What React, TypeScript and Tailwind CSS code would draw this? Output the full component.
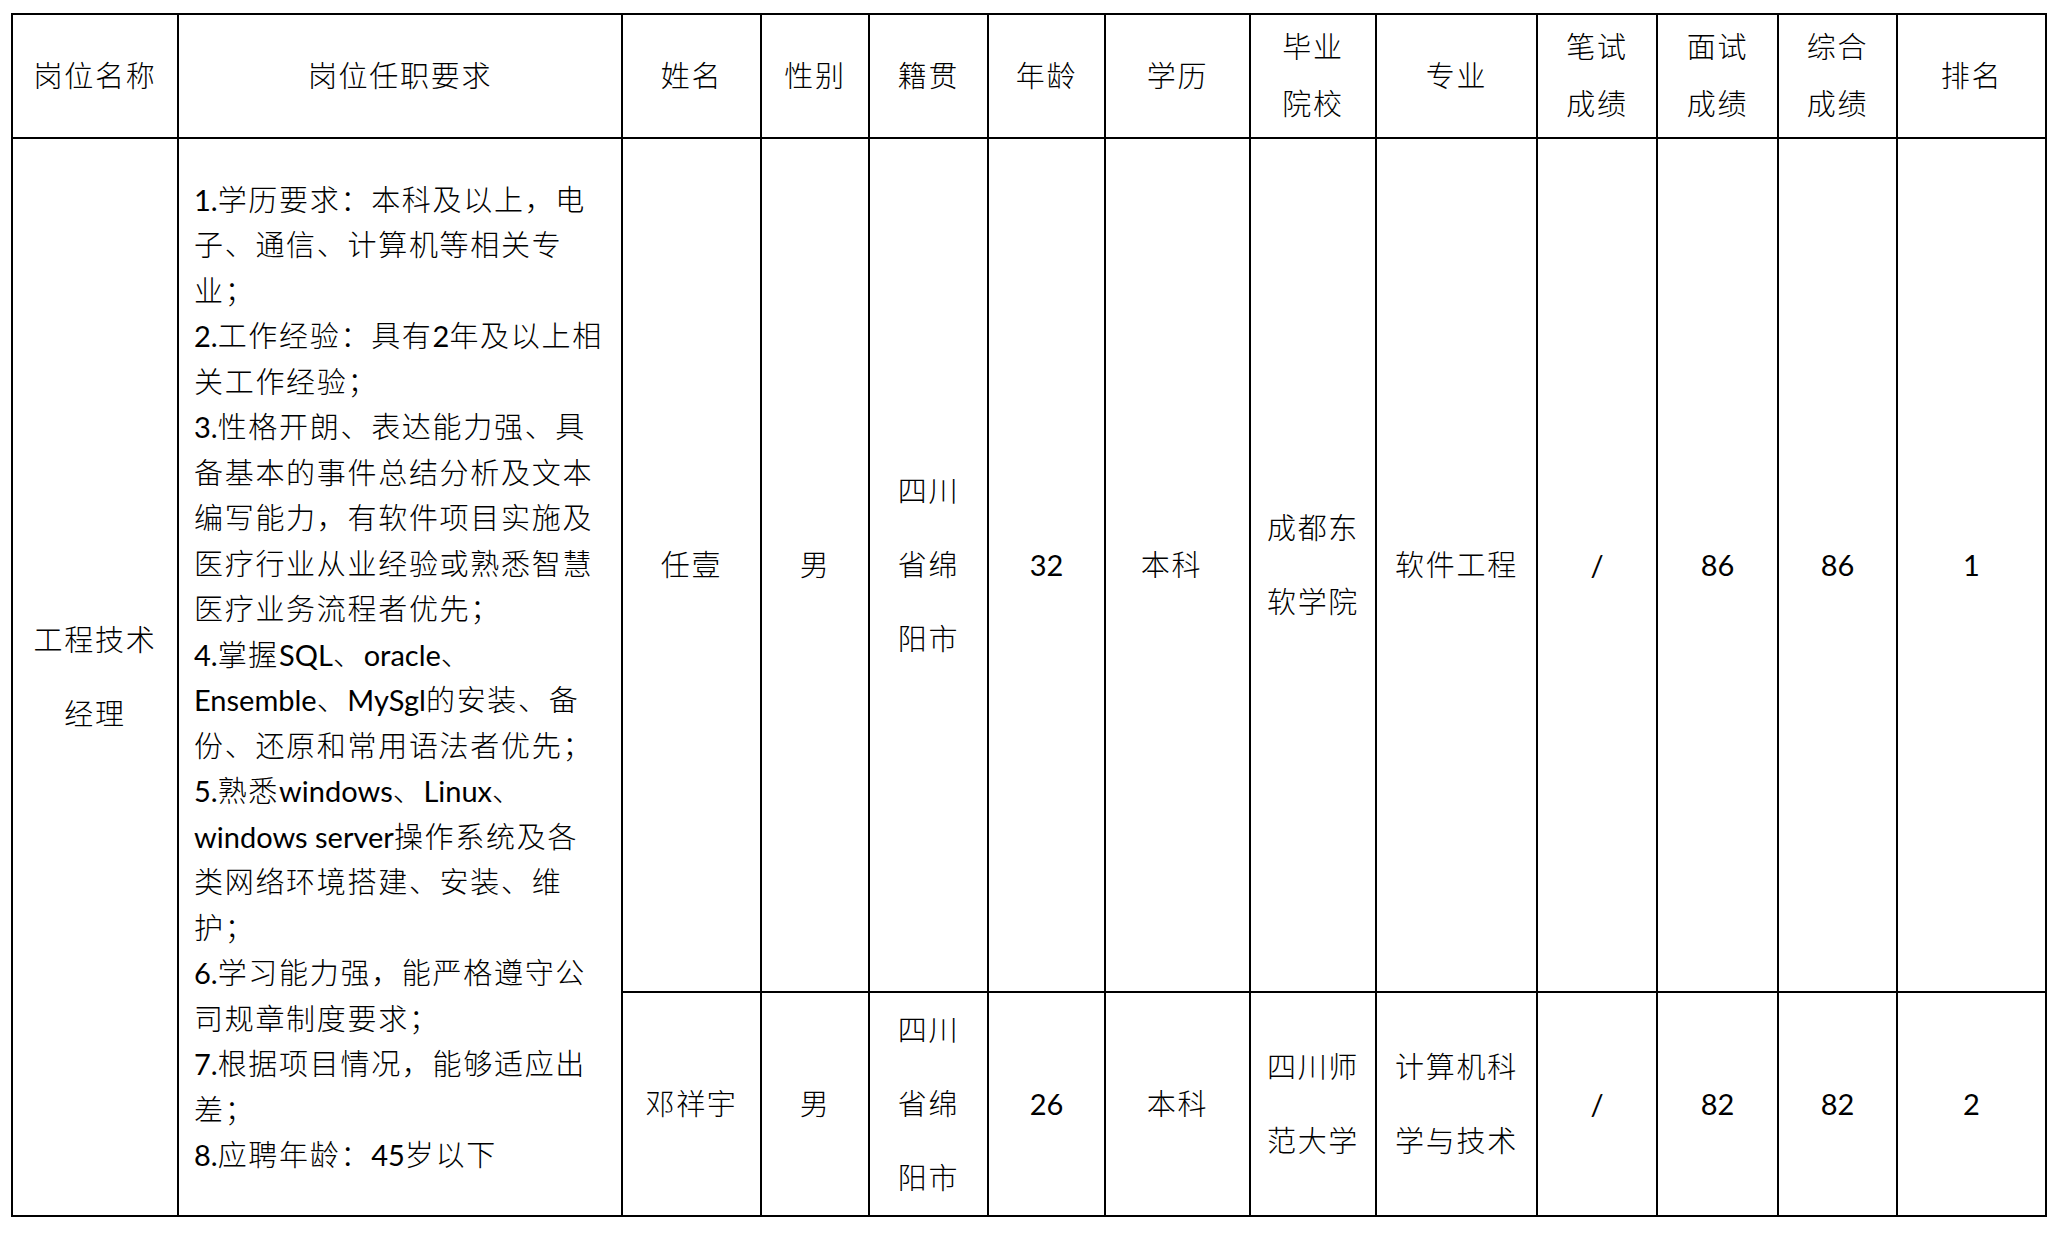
import React from "react";

function T({ s }: { s: string }) {
  const parts = s.split(/([\x20-\x7E]+)/).filter((p) => p.length > 0);
  return (
    <>
      {parts.map((p, i) =>
        /^[\x20-\x7E]+$/.test(p) ? (
          <span key={i} className="tracking-normal font-normal">
            {p}
          </span>
        ) : (
          <span key={i} className="font-light">{p}</span>
        )
      )}
    </>
  );
}

function Head({ lines }: { lines: string[] }) {
  return (
    <div className="bg-white flex flex-col items-center justify-center text-center leading-[56.6px]">
      {lines.map((l, i) => (
        <div key={i} className="whitespace-nowrap">
          <T s={l} />
        </div>
      ))}
    </div>
  );
}

function Cell({ lines, extra = "" }: { lines: string[]; extra?: string }) {
  return (
    <div className={`bg-white flex flex-col items-center justify-center text-center leading-[73.7px] ${extra}`}>
      {lines.map((l, i) => (
        <div key={i} className="whitespace-nowrap">
          <T s={l} />
        </div>
      ))}
    </div>
  );
}

const reqLines = [
  "1.学历要求：本科及以上，电",
  "子、通信、计算机等相关专",
  "业；",
  "2.工作经验：具有2年及以上相",
  "关工作经验；",
  "3.性格开朗、表达能力强、具",
  "备基本的事件总结分析及文本",
  "编写能力，有软件项目实施及",
  "医疗行业从业经验或熟悉智慧",
  "医疗业务流程者优先；",
  "4.掌握SQL、oracle、",
  "Ensemble、MySgl的安装、备",
  "份、还原和常用语法者优先；",
  "5.熟悉windows、Linux、",
  "windows server操作系统及各",
  "类网络环境搭建、安装、维",
  "护；",
  "6.学习能力强，能严格遵守公",
  "司规章制度要求；",
  "7.根据项目情况，能够适应出",
  "差；",
  "8.应聘年龄：45岁以下",
];

export default function App() {
  return (
    <div className="min-h-screen bg-white pl-[11px] pt-[13px] text-black text-[29px] tracking-[1.7px] font-[family-name:Lato,'Noto_Sans_CJK_SC',sans-serif]">
      <div className="inline-grid bg-black p-[2px] gap-[2px] grid-cols-[164px_442px_137px_106px_117px_115px_143px_124px_159px_118px_119px_117px_147px] grid-rows-[122px_852px_222px]">
        <Head lines={["岗位名称"]} />
        <Head lines={["岗位任职要求"]} />
        <Head lines={["姓名"]} />
        <Head lines={["性别"]} />
        <Head lines={["籍贯"]} />
        <Head lines={["年龄"]} />
        <Head lines={["学历"]} />
        <Head lines={["毕业", "院校"]} />
        <Head lines={["专业"]} />
        <Head lines={["笔试", "成绩"]} />
        <Head lines={["面试", "成绩"]} />
        <Head lines={["综合", "成绩"]} />
        <Head lines={["排名"]} />

        <Cell lines={["工程技术", "经理"]} extra="row-span-2" />
        <div className="row-span-2 bg-white flex flex-col justify-center pl-[15px] leading-[45.5px]">
          {reqLines.map((l, i) => (
            <div key={i} className="whitespace-nowrap">
              <T s={l} />
            </div>
          ))}
        </div>

        <Cell lines={["任壹"]} />
        <Cell lines={["男"]} />
        <Cell lines={["四川", "省绵", "阳市"]} />
        <Cell lines={["32"]} />
        <Cell lines={["本科"]} extra="pr-[12px]" />
        <Cell lines={["成都东", "软学院"]} />
        <Cell lines={["软件工程"]} />
        <Cell lines={["/"]} />
        <Cell lines={["86"]} />
        <Cell lines={["86"]} />
        <Cell lines={["1"]} />

        <Cell lines={["邓祥宇"]} />
        <Cell lines={["男"]} />
        <Cell lines={["四川", "省绵", "阳市"]} />
        <Cell lines={["26"]} />
        <Cell lines={["本科"]} />
        <Cell lines={["四川师", "范大学"]} />
        <Cell lines={["计算机科", "学与技术"]} />
        <Cell lines={["/"]} />
        <Cell lines={["82"]} />
        <Cell lines={["82"]} />
        <Cell lines={["2"]} />
      </div>
    </div>
  );
}
